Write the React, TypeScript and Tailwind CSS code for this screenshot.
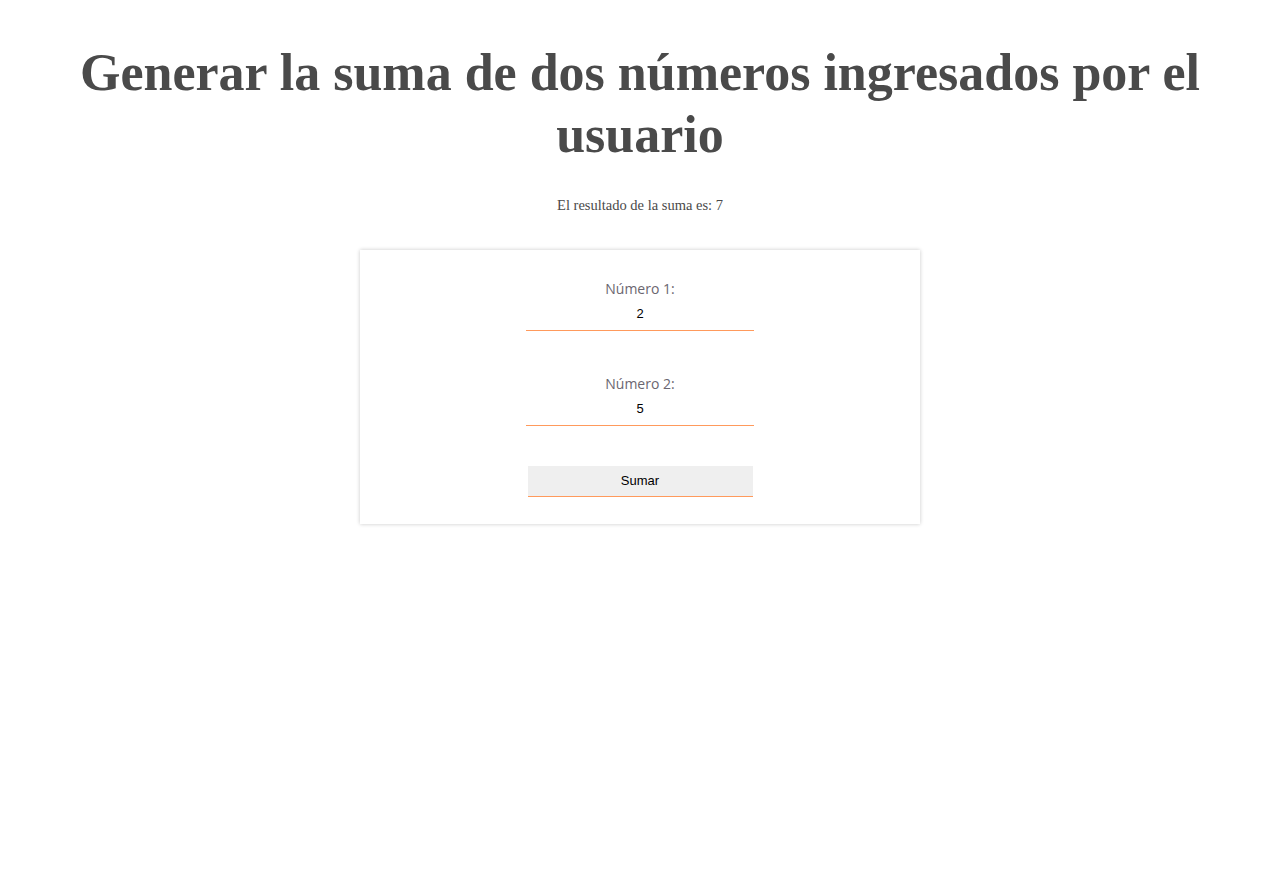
import React, { useState } from 'react';

const App = () => {
  const [a, setA] = useState('2');
  const [b, setB] = useState('5');
  const [total, setTotal] = useState(7);

  return (
    <div className="min-h-screen bg-white pt-[42px] text-[#4a4a4a]">
      <h1 className="mx-auto max-w-[1180px] text-center font-['Liberation_Serif',serif] text-[52px] font-bold leading-[62px] text-[#4a4a4a]">
        Generar la suma de dos números ingresados por el usuario
      </h1>
      <p className="mt-[30px] text-center font-['Liberation_Serif',serif] text-[14.5px] leading-[18px] text-[#4a4a4a]">
        El resultado de la suma es: {total}
      </p>

      <div className="mx-auto mt-[36px] flex w-[560px] flex-col items-center bg-white pt-[29px] pb-[27px] shadow-[0_0_4px_rgba(0,0,0,0.22)]">
        <label className="font-['Open_Sans',sans-serif] text-[14px] leading-[19px] text-[#6b6670]">Número 1:</label>
        <input
          value={a}
          onChange={(e) => setA(e.target.value)}
          className="mt-[5px] h-[28px] w-[228px] border-0 border-b border-solid border-b-[#ff9a5c] pb-[7px] text-center font-['Liberation_Sans',sans-serif] text-[13px] text-black outline-none"
        />
        <label className="mt-[43px] font-['Open_Sans',sans-serif] text-[14px] leading-[19px] text-[#6b6670]">Número 2:</label>
        <input
          value={b}
          onChange={(e) => setB(e.target.value)}
          className="mt-[5px] h-[28px] w-[228px] border-0 border-b border-solid border-b-[#ff9a5c] pb-[7px] text-center font-['Liberation_Sans',sans-serif] text-[13px] text-black outline-none"
        />
        <button
          onClick={() => setTotal((Number(a) || 0) + (Number(b) || 0))}
          className="mt-[40px] h-[31px] w-[225px] border-0 border-b border-solid border-b-[#ff9a5c] bg-[#efefef] font-['Liberation_Sans',sans-serif] text-[13px] text-black"
        >
          Sumar
        </button>
      </div>
    </div>
  );
};

export default App;
